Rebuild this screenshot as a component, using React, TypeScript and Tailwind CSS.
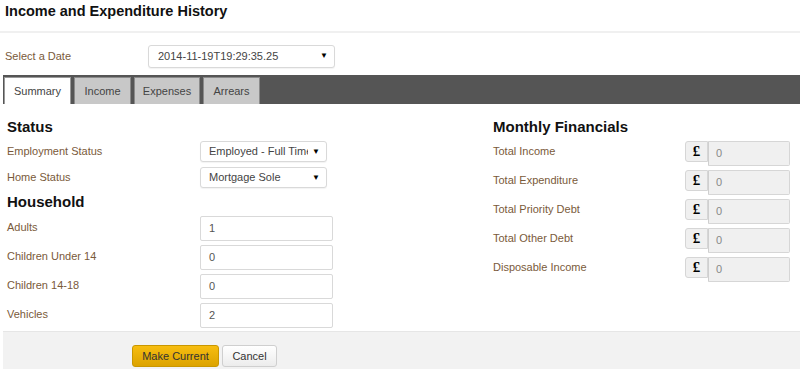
import React from "react"

const label = "text-[11px] text-[#7a5a3a]"

function FakeSelect(props: { value: string; className: string }) {
  return (
    <div className={"flex items-center bg-white border border-[#d9d9d9] rounded-[3px] shadow-[0_1px_1px_rgba(0,0,0,0.05)] " + props.className}>
      <div className="flex-1 overflow-hidden whitespace-nowrap text-[11px] text-[#444]">{props.value}</div>
      <span className="text-[8px] text-black pl-1 pr-[6px]">▼</span>
    </div>
  )
}

function TextBox(props: { value: string }) {
  return (
    <div className="w-[133px] h-[25px] flex items-center px-[8px] bg-white border border-[#d9d9d9] rounded-[2px] text-[11px] text-[#555]">
      {props.value}
    </div>
  )
}

function MoneyRow(props: { name: string }) {
  return (
    <div className="flex items-start h-[25px]">
      <div className={"w-[192px] leading-[21px] " + label}>{props.name}</div>
      <div className="w-[23px] h-[21px] flex items-center justify-center bg-[#f0f0f0] border border-[#d6d6d6] rounded-l-[3px] font-['Liberation_Serif',serif] font-bold text-[15px] text-black">£</div>
      <div className="w-[82px] h-[25px] flex items-center px-[7px] bg-[#f0f0f0] border border-[#d6d6d6] border-l-[#cfcfcf] rounded-r-[2px] text-[11px] text-[#888]">0</div>
    </div>
  )
}

const tabs = [
  { name: "Summary", w: "w-[67px]" },
  { name: "Income", w: "w-[57px]" },
  { name: "Expenses", w: "w-[66px]" },
  { name: "Arrears", w: "w-[57px]" },
]

export default function App() {
  return (
    <div className="w-full h-[369px] overflow-hidden bg-white flex flex-col font-['Liberation_Sans',Arial,sans-serif]">
      <div className="h-[31px] flex items-center pl-[5px] pb-[7px] text-[14.5px] font-bold text-[#111]">Income and Expenditure History</div>
      <div className="h-[2px] bg-[#f0f0f0]" />
      <div className="h-[42px] flex items-center pl-[5px] pt-[4px]">
        <div className="w-[143px] text-[11px] text-[#7a5a3a]">Select a Date</div>
        <FakeSelect value="2014-11-19T19:29:35.25" className="w-[187px] h-[23px] pl-[9px]" />
      </div>
      <div className="ml-[3px] flex-1 flex flex-col">
        <div className="h-[29px] bg-[#555] flex items-end gap-[3px] pl-[1px]">
          {tabs.map((t, i) => (
            <div
              key={t.name}
              className={
                i === 0
                  ? "h-[27px] flex items-center justify-center bg-white border border-[#999] border-b-0 text-[11px] text-[#444] " + t.w
                  : "h-[27px] flex items-center justify-center bg-[#c8c8c8] border border-[#8a8a8a] border-b-0 text-[11px] text-[#444] " + t.w
              }
            >
              {t.name}
            </div>
          ))}
        </div>
        <div className="h-[227px] grid grid-cols-[490px_1fr]">
          <div className="pl-[4px] pt-[14px] flex flex-col">
            <div className="h-[18px] leading-[18px] text-[15px] font-bold text-[#111]">Status</div>
            <div className="mt-[5px] flex flex-col gap-[5px]">
              <div className="flex items-center">
                <div className={"w-[193px] " + label}>Employment Status</div>
                <FakeSelect value="Employed - Full Time" className="w-[127px] h-[21px] pl-[8px]" />
              </div>
              <div className="flex items-center">
                <div className={"w-[193px] " + label}>Home Status</div>
                <FakeSelect value="Mortgage Sole" className="w-[127px] h-[21px] pl-[8px]" />
              </div>
            </div>
            <div className="mt-[5px] h-[18px] leading-[18px] text-[15px] font-bold text-[#111]">Household</div>
            <div className="mt-[5px] flex flex-col gap-[4px]">
              {[["Adults", "1"], ["Children Under 14", "0"], ["Children 14-18", "0"], ["Vehicles", "2"]].map(([n, v]) => (
                <div key={n} className="flex items-center">
                  <div className={"w-[193px] pb-[2px] " + label}>{n}</div>
                  <TextBox value={v} />
                </div>
              ))}
            </div>
          </div>
          <div className="pt-[14px] flex flex-col">
            <div className="h-[18px] leading-[18px] text-[15px] font-bold text-[#111]">Monthly Financials</div>
            <div className="mt-[5px] flex flex-col gap-[4px]">
              {["Total Income", "Total Expenditure", "Total Priority Debt", "Total Other Debt", "Disposable Income"].map((n) => (
                <MoneyRow key={n} name={n} />
              ))}
            </div>
          </div>
        </div>
        <div className="flex-1 bg-[#f2f2f2] border-t border-[#e6e6e6] pl-[129px] pt-[13px] flex items-start gap-[3px]">
          <button className="w-[87px] h-[22px] rounded-[3px] border border-[#c99700] bg-gradient-to-b from-[#f7bd10] to-[#dca300] text-[11px] text-[#333]">Make Current</button>
          <button className="w-[55px] h-[22px] rounded-[3px] border border-[#cfcfcf] bg-gradient-to-b from-white to-[#ececec] text-[11px] text-[#333]">Cancel</button>
        </div>
      </div>
    </div>
  )
}
